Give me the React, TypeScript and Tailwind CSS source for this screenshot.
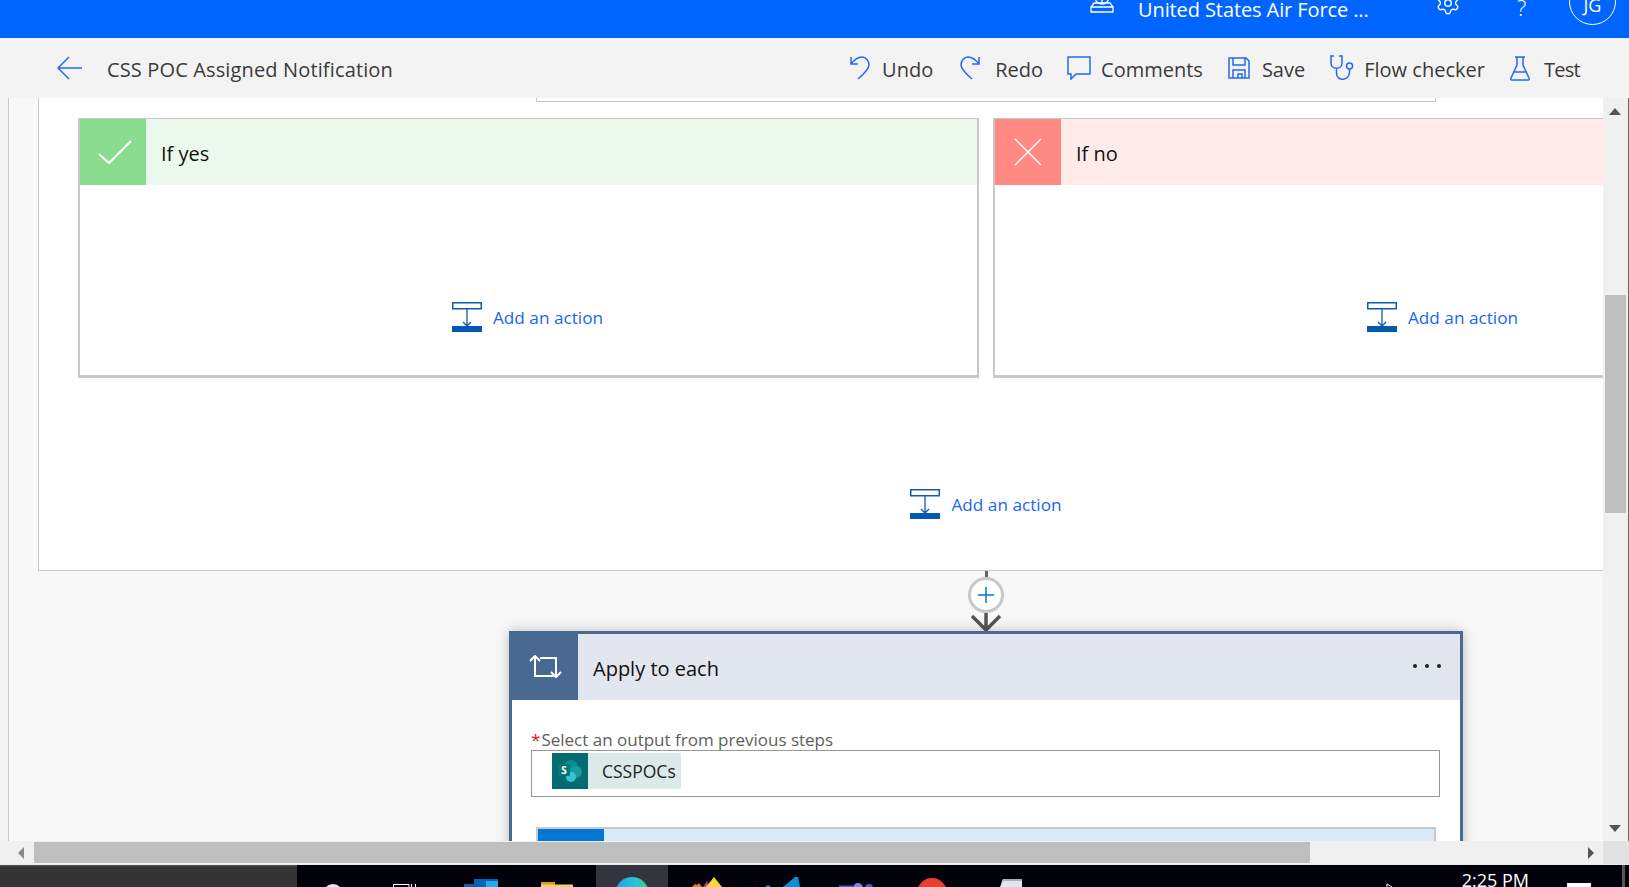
import React from 'react';
import { Settings } from 'lucide-react';

const font = "font-['Open_Sans',sans-serif]";

const BlueIcon = ({ w, h, children }: { w: number; h: number; children: React.ReactNode }) => (
  <svg width={w} height={h} viewBox={`0 0 ${w} ${h}`} fill="none" stroke="#2468f2" strokeWidth="1.5" className="shrink-0">
    {children}
  </svg>
);

const AddAction = () => (
  <div className="flex items-center gap-[11px] h-[30px]">
    <svg width="30" height="30" viewBox="0 0 30 30" className="shrink-0">
      <rect x="0.75" y="0.75" width="28.5" height="6" fill="#fff" stroke="#0f5cad" strokeWidth="1.5" />
      <path d="M15 7V23M11 20l4 4 4-4" fill="none" stroke="#0f5cad" strokeWidth="1.3" />
      <rect x="0" y="24" width="30" height="6" fill="#0458ae" />
    </svg>
    <span className="mt-[2px] text-[17.2px] text-[#1a66f0] leading-none">Add an action</span>
  </div>
);

const Branch = ({ yes }: { yes: boolean }) => (
  <div className="w-[901px] h-[260px] shrink-0 border-2 border-t border-[#c8c8c8] border-b-[3px] flex flex-col">
    <div className={`h-[66px] flex items-center ${yes ? 'bg-[#ebf9ed]' : 'bg-[#ffecea]'}`}>
      <div className={`w-[66px] h-full flex items-center justify-center ${yes ? 'bg-[#8adc8e]' : 'bg-[#ff8a84]'}`}>
        {yes ? (
          <svg width="34" height="26" viewBox="0 0 34 26" fill="none" stroke="#fff" strokeWidth="2" className="ml-[3px]"><path d="M1 15l10 9L33 2" /></svg>
        ) : (
          <svg width="28" height="28" viewBox="0 0 28 28" fill="none" stroke="#fff" strokeWidth="1.4"><path d="M1 1l26 26M27 1L1 27" /></svg>
        )}
      </div>
      <span className="ml-[15px] mt-[4px] text-[20px] text-[#111]">{yes ? 'If yes' : 'If no'}</span>
    </div>
    <div className="flex justify-center pt-[117px] pr-[2px]">
      <AddAction />
    </div>
  </div>
);

const ToolButton = ({ icon, label, gap, ml, extra = '' }: { icon: React.ReactNode; label: string; gap: string; ml: string; extra?: string }) => (
  <div className={`flex items-center ${gap} ${ml}`}>
    {icon}
    <span className={`mt-[4px] text-[20px] text-[#3b3a39] ${extra}`}>{label}</span>
  </div>
);

const App: React.FC = () => {
  return (
    <div className={`w-[1629px] h-[887px] flex flex-col overflow-hidden bg-[#f3f3f3] ${font}`}>
      {/* Top bar, scrolled off the top of the window */}
      <div className="h-[38px] shrink-0 bg-[#0065ff] flex items-start overflow-hidden text-white">
        <div className="ml-auto flex items-center -mt-[7px] h-[34px]">
          <svg width="24" height="24" viewBox="0 0 24 24" fill="none" stroke="#fff" strokeWidth="1.3" className="mr-[24px] mb-[18px]">
            <circle cx="12" cy="8" r="7" />
            <path d="M5 8h14M12 1v14M1 18l3-4h16l3 4v5H1zM1 18h22" />
          </svg>
          <span className="text-[20px] tracking-[-0.1px] w-[232px] whitespace-nowrap">United States Air Force ...</span>
          <Settings size={26} strokeWidth={1.3} className="ml-[65px] mb-[14px]" />
          <span className="ml-[56px] w-[12px] mb-[6px] text-[22px] font-light">?</span>
          <div className="ml-[40px] mr-[13px] w-[47px] h-[47px] mb-[17px] shrink-0 rounded-full border border-white flex items-center justify-center">
            <span className="text-[18px] leading-none mt-[7px]">JG</span>
          </div>
        </div>
      </div>

      {/* Command bar */}
      <div className="h-[60px] shrink-0 flex items-center">
        <svg width="26" height="24" viewBox="0 0 26 24" fill="none" stroke="#2468f2" strokeWidth="1.5" className="ml-[57px]">
          <path d="M25 12H1M12 1L1 12l11 11" />
        </svg>
        <span className="ml-[24px] mt-[4px] text-[20px] tracking-[0.14px] text-[#3b3a39]">CSS POC Assigned Notification</span>
        <div className="ml-auto mr-[49px] flex items-center">
          <ToolButton
            gap="gap-[12px]"
            ml="ml-0"
            label="Undo"
            icon={
              <BlueIcon w={20} h={24}>
                <path d="M1 1v7h7M1 8C4 4 8 1 12 1c4 0 7 4 7 8 0 4-4 8-11 14" />
              </BlueIcon>
            }
          />
          <ToolButton
            gap="gap-[15px]"
            ml="ml-[27px]"
            label="Redo"
            icon={
              <BlueIcon w={20} h={24}>
                <path d="M19 1v7h-7M19 8C16 4 12 1 8 1 4 1 1 5 1 9c0 4 4 8 11 14" />
              </BlueIcon>
            }
          />
          <ToolButton
            gap="gap-[10px]"
            ml="ml-[24px]"
            label="Comments"
            icon={
              <BlueIcon w={24} h={24}>
                <path d="M1 1h22v17H9l-5 5v-5H1z" />
              </BlueIcon>
            }
          />
          <ToolButton
            gap="gap-[12px]"
            ml="ml-[25px]"
            label="Save"
            icon={
              <BlueIcon w={22} h={22}>
                <path d="M1 1h17l3 3v17H1zM5 1v7h12V1M5 21v-8h12v8M10 21v-4h4v4" />
              </BlueIcon>
            }
          />
          <ToolButton
            gap="gap-[9px]"
            ml="ml-[24px]"
            label="Flow checker"
            icon={
              <BlueIcon w={26} h={26}>
                <path d="M5 1H2v7c0 7 11 7 11 0V1h-3M7.500 13v5c0 9 13 8 13-1v-3" />
                <circle cx="20.500" cy="11" r="3" />
              </BlueIcon>
            }
          />
          <ToolButton
            gap="gap-[14px]"
            ml="ml-[25px]"
            label="Test"
            extra="tracking-[-0.7px]"
            icon={
              <BlueIcon w={20} h={25}>
                <path d="M5 1h10M7 1v8L1 22c-.5 1 0 2 1 2h16c1 0 1.500-1 1-2L13 9V1M4 16h12" />
              </BlueIcon>
            }
          />
        </div>
      </div>

      {/* Designer area with vertical scrollbar */}
      <div className="h-[743px] shrink-0 flex">
        <div className="w-[8px] shrink-0 bg-[#f3f3f3]" />
        <div className="flex-1 min-w-0 overflow-hidden bg-[#f8f8f8] border-l border-[#c8c8c8]">
          <div className="w-[1954px] flex flex-col items-center">
            {/* Condition block */}
            <div className="w-[1896px] h-[473px] shrink-0 bg-white border-x border-b border-[#c8c8c8] flex flex-col items-center">
              <div className="w-[900px] h-[4px] shrink-0 border-x border-b border-[#c8c8c8]" />
              <div className="mt-[16px] flex gap-[14px]">
                <Branch yes />
                <Branch yes={false} />
              </div>
              <div className="mt-[111px]">
                <AddAction />
              </div>
            </div>

            {/* Connector */}
            <div className="w-[3px] h-[6px] bg-[#666]" />
            <div className="w-[36px] h-[36px] rounded-full bg-white border-[3px] border-[#c8c8c8] flex items-center justify-center">
              <svg width="16" height="16" viewBox="0 0 16 16" stroke="#0078d4" strokeWidth="1.500"><path d="M8 0v16M0 8h16" /></svg>
            </div>
            <svg width="30" height="18" viewBox="0 0 30 18" fill="none" stroke="#555" strokeWidth="3.500">
              <path d="M1 3l14 14L29 3M15 0v16" />
            </svg>

            {/* Apply to each card */}
            <div className="w-[954px] shrink-0 bg-white border-[3px] border-[#486991] border-b-0 shadow-[0_0_12px_rgba(0,0,0,0.25)] h-[300px]">
              <div className="h-[66px] bg-[#e2e6ef] flex items-center">
                <div className="w-[66px] h-full bg-[#486991] flex items-center justify-center">
                  <svg width="33" height="24" viewBox="0 0 33 24" fill="none" stroke="#fff" strokeWidth="2">
                    <path d="M1 6l5-5 5 5M6 1v20h20M22 17l5 5 5-5M27 22V3H11" />
                  </svg>
                </div>
                <span className="ml-[15px] text-[20px] text-[#111] mt-[4px]">Apply to each</span>
                <div className="ml-auto mr-[19px] flex gap-[8px] -mt-[2px]">
                  <div className="w-[4px] h-[4px] rounded-full bg-[#222]" />
                  <div className="w-[4px] h-[4px] rounded-full bg-[#222]" />
                  <div className="w-[4px] h-[4px] rounded-full bg-[#222]" />
                </div>
              </div>
              <div className="pl-[19px] pr-[20px] pt-[28px]">
                <div className="h-[22px] flex items-center text-[17px] text-[#605e5c] leading-none">
                  <span className="text-[#e81123] mr-[1px]">*</span>
                  Select an output from previous steps
                </div>
                <div className="h-[47px] border border-[#989898] pl-[20px] pt-[2px]">
                  <div className="h-[36px] w-fit flex items-center bg-[#dbe9e9]">
                    <div className="w-[36px] h-[36px] bg-[#036c70] flex items-center justify-center">
                      <svg width="26" height="24" viewBox="0 0 26 24">
                        <circle cx="14" cy="8" r="7" fill="#058f92" />
                        <circle cx="19" cy="13" r="6" fill="#1a9ba1" />
                        <circle cx="14" cy="18" r="5" fill="#37c6d0" />
                        <rect x="1" y="5" width="12" height="12" rx="1" fill="#03787c" />
                        <text x="7" y="15" fontSize="10" fontWeight="700" fill="#fff" textAnchor="middle">S</text>
                      </svg>
                    </div>
                    <span className="ml-[14px] mr-[5px] text-[17.5px] text-[#222]">CSSPOCs</span>
                  </div>
                </div>
                <div className="mt-[30px] ml-[5px] mr-[4px] h-[40px] border-2 border-[#c8c8c8] border-b-0 border-t-[2px] bg-[#d9eaf8]">
                  <div className="w-[66px] h-full bg-[#0078d4]" />
                </div>
              </div>
            </div>
          </div>
        </div>

        {/* Vertical scrollbar */}
        <div className="w-[26px] shrink-0 bg-[#f0f0f0] flex flex-col items-center border-r border-[#666] pr-[1px]">
          <div className="mt-[10px] w-0 h-0 border-x-[6px] border-x-transparent border-b-[7px] border-b-[#555]" />
          <div className="mt-[180px] w-[21px] h-[218px] bg-[#bfbfbf]" />
          <div className="mt-[312px] w-0 h-0 border-x-[6px] border-x-transparent border-t-[7px] border-t-[#555]" />
        </div>
      </div>

      {/* Horizontal scrollbar */}
      <div className="h-[24px] shrink-0 bg-[#f0f0f0] flex items-center border-b border-[#e8e8e8]">
        <div className="ml-[18px] w-0 h-0 border-y-[6px] border-y-transparent border-r-[6px] border-r-[#888]" />
        <div className="ml-[10px] w-[1276px] h-[21px] bg-[#bfbfbf]" />
        <div className="ml-[278px] w-0 h-0 border-y-[6px] border-y-transparent border-l-[6px] border-l-[#555]" />
        <div className="ml-auto w-[26px] h-full bg-[#e2e2e2]" />
      </div>

      {/* Windows taskbar, cut by the bottom of the window */}
      <div className="h-[22px] shrink-0 bg-[#01010b] flex items-start overflow-hidden text-white">
        <div className="w-[297px] h-full shrink-0 bg-[#333] border-t border-[#555]" />
        {/* search */}
        <svg width="20" height="22" viewBox="0 0 20 22" className="ml-[26px] shrink-0"><circle cx="10" cy="29" r="10" fill="#e8e8e8" /></svg>
        {/* task view */}
        <svg width="23" height="22" viewBox="0 0 23 22" fill="none" stroke="#fff" className="ml-[50px] shrink-0"><path d="M.5 22v-2.500H16V22M18.500 22v-3M22.500 22v-3" /></svg>
        {/* outlook */}
        <svg width="34" height="22" viewBox="0 0 34 22" className="ml-[48px] shrink-0">
          <rect x="10" y="14" width="24" height="8" fill="#0364b8" />
          <rect x="22" y="16" width="12" height="6" fill="#28a8ea" />
          <rect x="0" y="19" width="14" height="3" fill="#0f5ca8" />
        </svg>
        {/* explorer */}
        <svg width="32" height="22" viewBox="0 0 32 22" className="ml-[43px] shrink-0">
          <rect x="0" y="17" width="14" height="5" fill="#d59f12" />
          <rect x="0" y="19.500" width="32" height="3" fill="#f5cf6b" />
        </svg>
        {/* active browser */}
        <div className="ml-[23px] w-[72px] h-full shrink-0 bg-[#33343c] flex justify-center">
          <svg width="36" height="22" viewBox="0 0 36 22">
            <defs>
              <linearGradient id="edgeFill" x1="0" y1="0" x2="1" y2="0">
                <stop offset="0" stopColor="#1b9de2" />
                <stop offset="0.6" stopColor="#2bc3d6" />
                <stop offset="1" stopColor="#35d07f" />
              </linearGradient>
            </defs>
            <circle cx="18" cy="29" r="17" fill="url(#edgeFill)" />
          </svg>
        </div>
        {/* flame */}
        <svg width="30" height="22" viewBox="0 0 30 22" className="ml-[24px] shrink-0">
          <path d="M0 22l3-3 2 1 2-2 3 4z" fill="#f07a1c" />
          <path d="M11 22l4-6 2 6z" fill="#c43a8a" />
          <path d="M14 22l8-10 8 10z" fill="#f7d93b" />
        </svg>
        {/* azure */}
        <svg width="35" height="22" viewBox="0 0 35 22" className="ml-[43px] shrink-0">
          <path d="M0 22l3-2 3 2z" fill="#0aa5c8" />
          <path d="M18 22l12-10h3l2 10z" fill="#0a8fd8" />
        </svg>
        {/* teams */}
        <svg width="34" height="22" viewBox="0 0 34 22" className="ml-[39px] shrink-0">
          <circle cx="30" cy="23" r="4" fill="#5059c9" />
          <circle cx="19" cy="23" r="5" fill="#7b83eb" />
          <rect x="0" y="20.500" width="14" height="2" fill="#5059c9" />
        </svg>
        {/* red app */}
        <svg width="30" height="22" viewBox="0 0 30 22" className="ml-[44px] shrink-0"><circle cx="15" cy="28" r="15" fill="#ea3e2f" /></svg>
        {/* notepad */}
        <svg width="24" height="22" viewBox="0 0 24 22" className="ml-[51px] shrink-0">
          <path d="M2 22l3-8h19v8z" fill="#dfe8ee" />
          <path d="M5 14h19v2H4z" fill="#9db4bd" />
        </svg>

        {/* tray */}
        <svg width="12" height="22" viewBox="0 0 12 22" fill="none" stroke="#fff" className="ml-auto shrink-0"><path d="M1 22v-3l5 3" /></svg>
        <div className="ml-[64px] text-[18px] leading-none mt-[6px] whitespace-nowrap">2:25 PM</div>
        <div className="ml-[38px] mt-[18px] w-[24px] h-[4px] bg-white shrink-0" />
        <div className="ml-[31px] mr-[4px] w-[3px] h-full bg-[#555] shrink-0" />
      </div>
    </div>
  );
};

export default App;
